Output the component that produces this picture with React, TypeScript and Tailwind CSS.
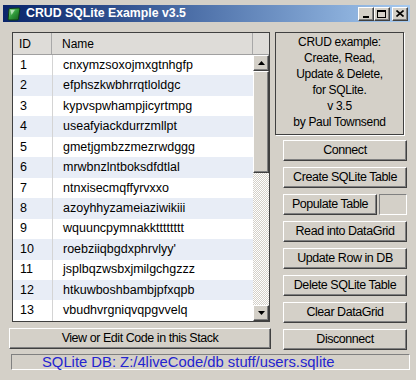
import React from "react";

const rows: [number, string][] = [
  [1, "cnxymzsoxojmxgtnhgfp"],
  [2, "efphszkwbhrrqtloldgc"],
  [3, "kypvspwhampjicyrtmpg"],
  [4, "useafyiackdurrzmllpt"],
  [5, "gmetjgmbzzmezrwdggg"],
  [6, "mrwbnzlntboksdfdtlal"],
  [7, "ntnxisecmqffyrvxxo"],
  [8, "azoyhhyzameiaziwikiii"],
  [9, "wquuncpymnakktttttttt"],
  [10, "roebziiqbgdxphrvlyy'"],
  [11, "jsplbqzwsbxjmilgchgzzz"],
  [12, "htkuwboshbambjpfxqpb"],
  [13, "vbudhvrgniqvqpgvvelq"],
];

const raised =
  "bg-[#d4d0c8] border-t border-l border-t-white border-l-white border-b border-r border-b-[#404040] border-r-[#404040] shadow-[inset_-1px_-1px_0_#808080]";

function Btn({ label, className = "" }: { label: string; className?: string }) {
  return (
    <div
      className={`${raised} h-[21px] flex items-center justify-center text-[12.5px] tracking-[-0.45px] text-black ${className}`}
    >
      {label}
    </div>
  );
}

function CapBtn({ children }: { children: React.ReactNode }) {
  return (
    <div className={`${raised} w-[16px] h-[14px] flex items-center justify-center`}>
      {children}
    </div>
  );
}

export default function App() {
  return (
    <div className="w-[416px] h-[380px] bg-[#d4d0c8] pt-[5px] pl-[3px] pr-[6px] font-['Liberation_Sans',Arial,sans-serif] overflow-hidden select-none">
      {/* Title bar */}
      <div className="h-[17px] w-[407px] flex items-center bg-gradient-to-r from-[#0a246a] to-[#a6caf0] pl-[3px] pr-[2px]">
        <svg width="16" height="16" viewBox="0 0 16 16" className="shrink-0">
          <defs>
            <linearGradient id="g" x1="0" y1="0" x2="1" y2="1">
              <stop offset="0" stopColor="#8fe08f" />
              <stop offset="0.5" stopColor="#2f9a3a" />
              <stop offset="1" stopColor="#125a1c" />
            </linearGradient>
          </defs>
          <path d="M4 2.5 L13 2 Q14 2 13.8 3.2 L12.5 13 Q12.3 14 11.2 14 L3 14 Q2 14 2.1 13 L3 3.5 Q3.1 2.6 4 2.5 Z" fill="url(#g)" stroke="#0d3d12" strokeWidth="1" />
          <path d="M4.5 4 L9 3.7 L5.5 9 Z" fill="#d8f5d8" opacity="0.7" />
        </svg>
        <span className="ml-[4px] text-white font-bold text-[12.3px] leading-none">CRUD SQLite Example v3.5</span>
        <div className="flex-1" />
        <div className="flex items-center">
          <CapBtn>
            <div className="w-[6px] h-[2px] bg-black mt-[6px] -ml-[1px]" />
          </CapBtn>
          <CapBtn>
            <div className="w-[9px] h-[8px] border border-black border-t-2 -ml-[1px]" />
          </CapBtn>
          <div className="w-[2px]" />
          <CapBtn>
            <svg width="8" height="7" viewBox="0 0 8 7" className="-ml-[1px]">
              <path d="M0.5 0.5 L7.5 6.5 M7.5 0.5 L0.5 6.5" stroke="black" strokeWidth="1.6" />
            </svg>
          </CapBtn>
        </div>
      </div>

      {/* Body */}
      <div className="pt-[10px] pl-[6px] flex">
        {/* Left column */}
        <div className="w-[262px] flex flex-col">
          <div className="ml-[3px] w-[258px] h-[290px] border border-[#404040] bg-white flex flex-col">
            {/* header */}
            <div className="h-[22px] flex bg-[#dedcd8] border-b border-[#a0a0a0] text-[12px] text-black">
              <div className="w-[39px] border-r border-[#a8a8a8] pl-[6px] flex items-center">ID</div>
              <div className="w-[201px] border-r border-[#a8a8a8] pl-[10px] flex items-center">Name</div>
              <div className="flex-1" />
            </div>
            <div className="flex-1 flex">
              <div className="flex-1 flex flex-col">
                {rows.map(([id, name]) => (
                  <div
                    key={id}
                    className={`h-[20.46px] flex text-[12.5px] text-black ${id % 2 === 0 ? "bg-[#e8edf6]" : "bg-white"}`}
                  >
                    <div className="w-[40px] border-r border-[#d4d4d4] pl-[7px] flex items-center">{id}</div>
                    <div className="pl-[10px] flex items-center">{name}</div>
                  </div>
                ))}
              </div>
              {/* scrollbar */}
              <div className="w-[16px] flex flex-col">
                <div className={`${raised} h-[16px] flex items-center justify-center`}>
                  <svg width="7" height="4" viewBox="0 0 7 4">
                    <path d="M3.5 0 L7 4 L0 4 Z" fill="black" />
                  </svg>
                </div>
                <div className={`${raised} h-[102px]`} />
                <div className="flex-1 bg-[repeating-conic-gradient(#d4d0c8_0_25%,#ffffff_0_50%)] bg-[length:2px_2px]" />
                <div className={`${raised} h-[16px] flex items-center justify-center`}>
                  <svg width="7" height="4" viewBox="0 0 7 4">
                    <path d="M0 0 L7 0 L3.5 4 Z" fill="black" />
                  </svg>
                </div>
              </div>
            </div>
          </div>
          <Btn label="View or Edit Code in this Stack" className="mt-[6px] w-[262px]" />
        </div>

        {/* Right column */}
        <div className="ml-[4px] w-[133px] flex flex-col">
          <div className="w-[129px] h-[103px] border border-[#404040] shadow-[1px_1px_0_#ffffff] pt-[1px] flex flex-col items-center text-[12px] tracking-[-0.3px] leading-[16px] text-black text-center">
            <div>CRUD example:</div>
            <div>Create, Read,</div>
            <div>Update &amp; Delete,</div>
            <div>for SQLite.</div>
            <div>v 3.5</div>
            <div>by Paul Townsend</div>
          </div>
          <div className="mt-[5px] ml-[8px] w-[124px] flex flex-col gap-[6px]">
            <Btn label="Connect" />
            <Btn label="Create SQLite Table" />
            <div className="flex">
              <Btn label="Populate Table" className="w-[94px]" />
              <div className="ml-[2px] w-[28px] h-[21px] border-t border-l border-t-[#808080] border-l-[#808080] border-b border-r border-b-white border-r-white" />
            </div>
            <Btn label="Read into DataGrid" />
            <Btn label="Update Row in DB" />
            <Btn label="Delete SQLite Table" />
            <Btn label="Clear DataGrid" />
            <Btn label="Disconnect" />
          </div>
        </div>
      </div>

      {/* Status */}
      <div className="mt-[4px] ml-[8px] w-[399px] h-[16px] border-t border-l border-t-[#808080] border-l-[#808080] border-b border-r border-b-white border-r-white flex items-center pl-[30px] text-[14.8px] leading-none text-[#2424d0]">
        SQLite DB: Z:/4liveCode/db stuff/users.sqlite
      </div>
    </div>
  );
}
